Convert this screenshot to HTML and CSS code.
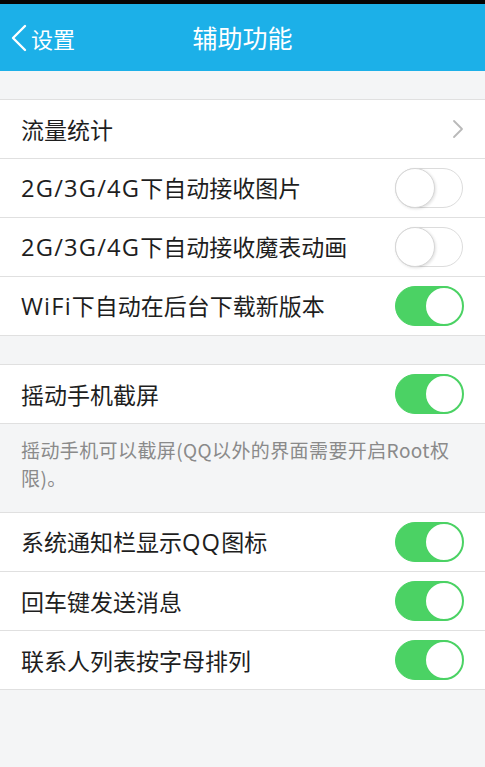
FILE: index.html
```html
<!DOCTYPE html>
<html lang="zh-CN">
<head>
<meta charset="utf-8">
<title>辅助功能</title>
<link rel="stylesheet" href="styles.css">
</head>
<body>
<div class="status"></div>
<header class="header">
  <div class="back">
    <svg class="back-icon" width="20" height="28" viewBox="0 0 20 28"><path d="M16 2 L4 14 L16 26" fill="none" stroke="#fff" stroke-width="2.4" stroke-linecap="round" stroke-linejoin="round"/></svg>
    <span class="back-text">设置</span>
  </div>
  <h1 class="title">辅助功能</h1>
</header>
<main class="content">
  <div class="gap"></div>
  <section class="group">
    <div class="row"><span class="label">流量统计</span>
      <svg class="arrow" width="12" height="20" viewBox="0 0 12 20"><path d="M2 2 L10 10 L2 18" fill="none" stroke="#b9b9b9" stroke-width="1.8" stroke-linecap="round" stroke-linejoin="round"/></svg>
    </div>
    <div class="row"><span class="label"><span class="lat">2G/3G/4G</span>下自动接收图片</span><span class="toggle"></span></div>
    <div class="row"><span class="label"><span class="lat">2G/3G/4G</span>下自动接收魔表动画</span><span class="toggle"></span></div>
    <div class="row"><span class="label"><span class="lat">WiFi</span>下自动在后台下载新版本</span><span class="toggle on"></span></div>
  </section>
  <div class="gap"></div>
  <section class="group">
    <div class="row"><span class="label">摇动手机截屏</span><span class="toggle on"></span></div>
  </section>
  <p class="desc">摇动手机可以截屏(QQ以外的界面需要开启Root权限)。</p>
  <section class="group">
    <div class="row"><span class="label">系统通知栏显示<span class="lat">QQ</span>图标</span><span class="toggle on"></span></div>
    <div class="row"><span class="label">回车键发送消息</span><span class="toggle on"></span></div>
    <div class="row"><span class="label">联系人列表按字母排列</span><span class="toggle on"></span></div>
  </section>
</main>
</body>
</html>
```
FILE: styles.css
```css
* { box-sizing: border-box; }
html, body {
  margin: 0;
  padding: 0;
  height: 100%;
}
body {
  background: #f4f5f6;
  font-family: "Noto Sans CJK SC", "Noto Sans", sans-serif;
  color: #1e1e1e;
}
.status {
  height: 4px;
  background: #050505;
}
.header {
  height: 67px;
  background: #1cb0e8;
  position: relative;
  display: flex;
  align-items: center;
  justify-content: center;
}
.back {
  position: absolute;
  left: 9px;
  top: 0;
  bottom: 0;
  display: flex;
  align-items: center;
  gap: 2px;
  color: #fff;
}
.back-icon { display: block; margin-top: 1px; }
.back-text {
  font-size: 22px;
  line-height: 1;
}
.title {
  margin: 0;
  font-size: 25px;
  font-weight: normal;
  color: #fff;
  line-height: 1;
}
.gap { height: 28px; }
.group {
  background: #fff;
  border-top: 1px solid #e0e0e0;
}
.row {
  height: 59px;
  border-bottom: 1px solid #e0e0e0;
  display: flex;
  align-items: center;
  justify-content: space-between;
  padding: 0 21px 0 21px;
}
.label {
  font-size: 23px;
  line-height: 1;
}
.lat {
  font-family: "Open Sans", "Noto Sans", sans-serif;
  font-size: 1.03em;
  letter-spacing: 0.05em;
}
.arrow { display: block; margin-right: 0; }
.toggle {
  width: 68px;
  height: 40px;
  border-radius: 20px;
  border: 1.5px solid #dcdcdc;
  background: #fff;
  position: relative;
  margin-right: 1px;
}
.toggle::after {
  content: "";
  position: absolute;
  left: -1.5px;
  top: -1.5px;
  width: 40px;
  height: 40px;
  border-radius: 50%;
  background: #fff;
  border: 1.5px solid #d6d6d6;
  box-shadow: 1px 1px 3px rgba(0,0,0,0.12);
  box-sizing: border-box;
}
.toggle.on {
  background: #4bd264;
  border-color: #4bd264;
}
.toggle.on::after {
  left: auto;
  right: -1.5px;
  border: 2px solid #4bd264;
  box-shadow: none;
}
.desc {
  margin: 0;
  height: 88px;
  padding: 12px 18px 0 21px;
  font-size: 19px;
  line-height: 28px;
  letter-spacing: 0.4px;
  color: #8a8a8a;
}
```
